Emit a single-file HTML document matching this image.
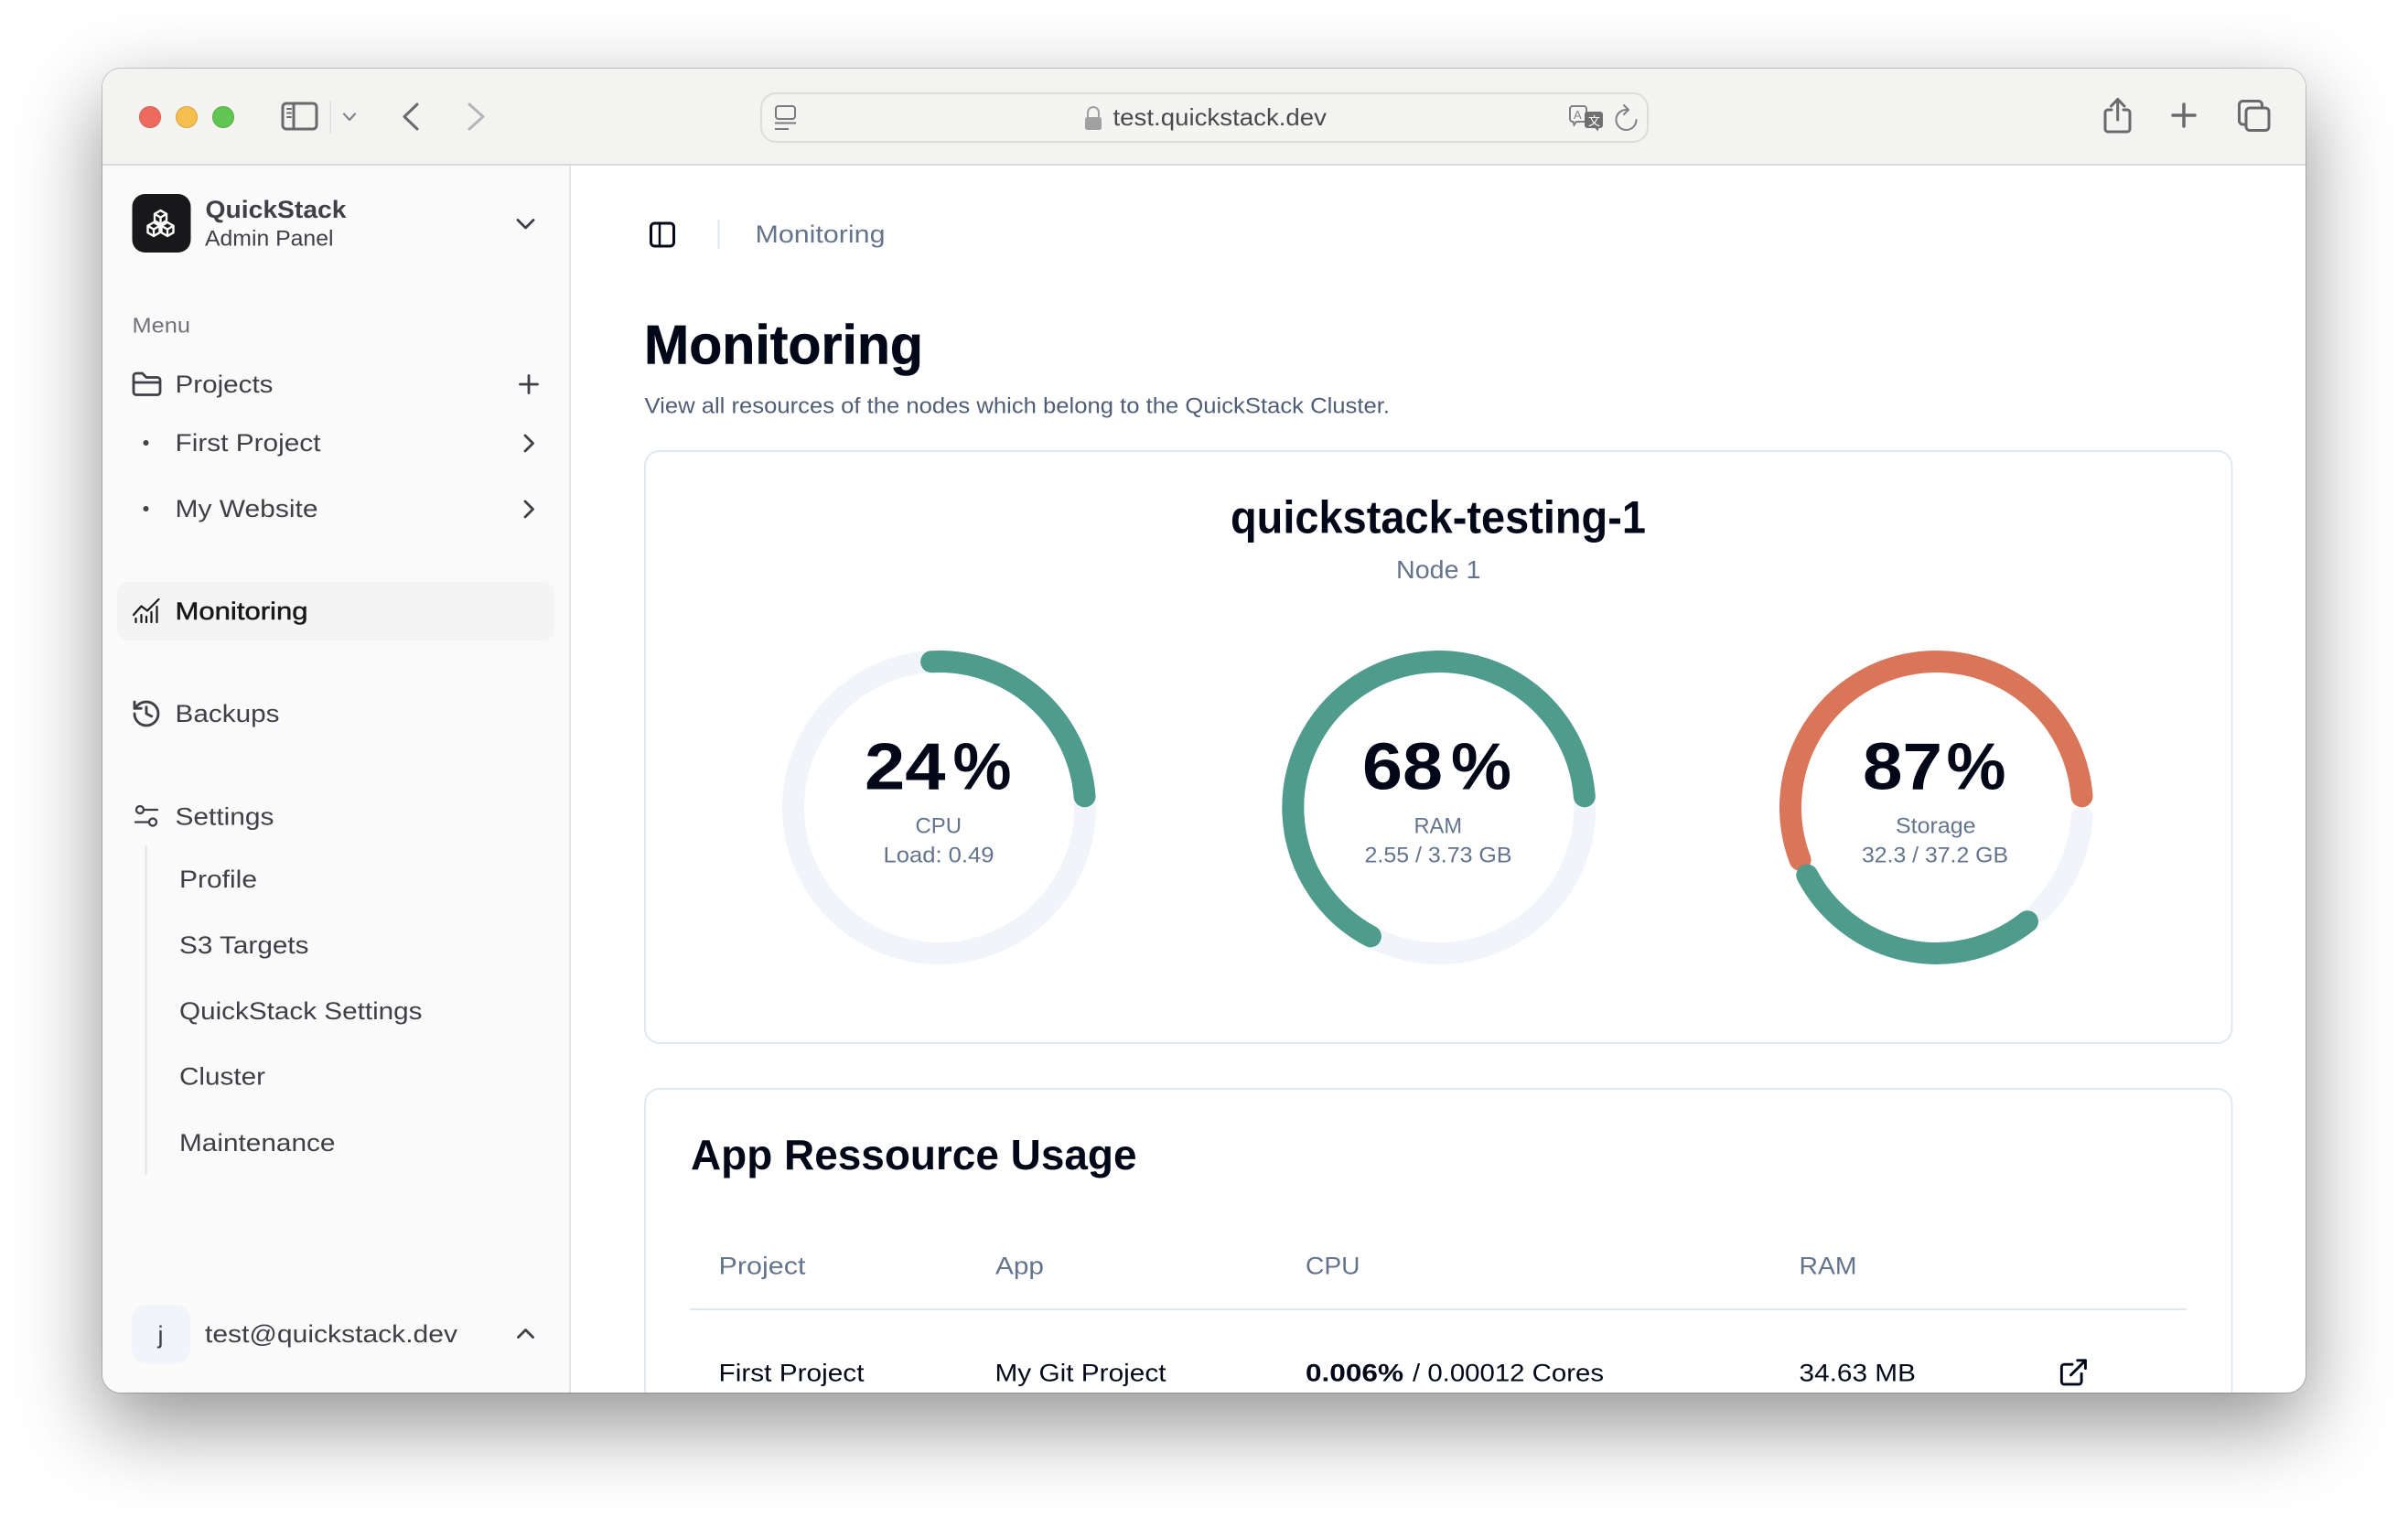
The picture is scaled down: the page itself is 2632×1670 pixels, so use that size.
<!DOCTYPE html>
<html lang="en">
<head>
<meta charset="utf-8">
<title>Monitoring - QuickStack</title>
<style>
html,body{margin:0;padding:0;background:#fff;width:2632px;height:1670px;overflow:hidden}
.win{position:absolute;left:112px;top:75px;width:2408px;height:1447px;border-radius:20px;background:#fff;box-shadow:0 34px 90px 2px rgba(0,0,0,.42),0 0 0 1px rgba(0,0,0,.18)}
.clip{position:absolute;inset:0;border-radius:20px;overflow:hidden}
svg{position:absolute;left:-112px;top:-75px;width:2632px;height:1670px}
text{font-family:"Liberation Sans","Noto Sans CJK SC",sans-serif;white-space:pre}
.s{fill:#3f3f46;font-size:27px}
.ic{fill:none;stroke:#3f3f46;stroke-width:2.8;stroke-linecap:round;stroke-linejoin:round}
.tb{fill:none;stroke:#6a6a6a;stroke-width:3;stroke-linecap:round;stroke-linejoin:round}
.dk{fill:#020817}
.mut{fill:#64748b}
.ring{fill:none;stroke-width:24;stroke-linecap:round}
</style>
</head>
<body>
<div class="win"><div class="clip">
<svg viewBox="0 0 2632 1670" xmlns="http://www.w3.org/2000/svg">
  <!-- backgrounds -->
  <rect x="112" y="75" width="2408" height="105" fill="#f3f3f2"/>
  <rect x="112" y="179" width="2408" height="2" fill="#d9d9d8"/>
  <rect x="112" y="181" width="511" height="1341" fill="#fafafa"/>
  <rect x="622" y="181" width="2" height="1341" fill="#e4e4e7"/>

  <!-- traffic lights -->
  <circle cx="164" cy="128" r="11.5" fill="#ed6a5e" stroke="#d5584d" stroke-width="1"/>
  <circle cx="204" cy="128" r="11.5" fill="#f5bf4f" stroke="#d9a33d" stroke-width="1"/>
  <circle cx="244" cy="128" r="11.5" fill="#61c554" stroke="#4fae45" stroke-width="1"/>

  <!-- toolbar left -->
  <rect x="309" y="113" width="37" height="28" rx="4" class="tb"/>
  <path d="M321 113v28" class="tb"/>
  <path d="M314 119h4M314 123.500h4M314 128h4" class="tb" style="stroke-width:2"/>
  <rect x="360.500" y="110" width="1.500" height="36" fill="#dedede"/>
  <path d="M376 124.500l6 6.500 6-6.500" class="tb" style="stroke:#858585;stroke-width:2.200"/>
  <path d="M456 114l-14 13.500 14 13.500" class="tb"/>
  <path d="M513 114l15 13.500-15 13.500" class="tb" style="stroke:#b5b5b5"/>

  <!-- url bar -->
  <rect x="832" y="102" width="969" height="53" rx="16" fill="#f4f4f3" stroke="#dcdcdb" stroke-width="2"/>
  <rect x="848" y="116" width="21" height="14" rx="3" fill="none" stroke="#7a7a7a" stroke-width="2"/>
  <path d="M847 134.500h23M847 141h15" fill="none" stroke="#7a7a7a" stroke-width="2"/>
  <rect x="1186" y="128" width="18" height="14" rx="2.500" fill="#a0a0a0"/>
  <path d="M1189 128v-5a6 6 0 0 1 12 0v5" fill="none" stroke="#a0a0a0" stroke-width="2"/>
  <text x="1216.500" y="137" font-size="26" fill="#4a4a4a" textLength="233.500" lengthAdjust="spacingAndGlyphs">test.quickstack.dev</text>
  <path d="M1719 116h12a3 3 0 0 1 3 3v11a3 3 0 0 1-3 3h-8l-2.500 3.500-1-3.500h-.5a3 3 0 0 1-3-3v-11a3 3 0 0 1 3-3z" fill="#f4f4f3" stroke="#808080" stroke-width="2"/>
  <text x="1720" y="130" font-size="13" fill="#808080">A</text>
  <path d="M1735 122h14a3 3 0 0 1 3 3v12a3 3 0 0 1-3 3h-1.500l-1 3.500-3-3.500h-8.500a3 3 0 0 1-3-3v-12a3 3 0 0 1 3-3z" fill="#6f6f6f"/>
  <text x="1736" y="137" font-size="13" fill="#fff">文</text>
  <path d="M1778 120A11 11 0 1 0 1788.500 131" fill="none" stroke="#808080" stroke-width="2" stroke-linecap="round"/>
  <path d="M1775 115l5 5-5 5" fill="none" stroke="#808080" stroke-width="2" stroke-linecap="round" stroke-linejoin="round"/>

  <!-- toolbar right -->
  <path d="M2308 120h-4a3 3 0 0 0-3 3v18a3 3 0 0 0 3 3h21a3 3 0 0 0 3-3v-18a3 3 0 0 0-3-3h-4" class="tb"/>
  <path d="M2314.700 131V110M2307.500 116l7.200-7.500 7.300 7.500" class="tb"/>
  <path d="M2375 126h24M2387 114v24" class="tb" style="stroke-width:3.500"/>
  <path d="M2454 136h-2.500a4 4 0 0 1-4-4v-17.500a4 4 0 0 1 4-4h17a4 4 0 0 1 4 4v2.500" class="tb"/>
  <rect x="2455" y="118" width="25" height="24.500" rx="4" class="tb"/>

  <!-- sidebar header -->
  <rect x="144.500" y="212" width="64" height="64" rx="14" fill="#18181b"/>
  <g fill="none" stroke="#fff" stroke-width="2.400" stroke-linejoin="round">
    <path d="M175.500 230l6.500 3.800v7.400l-6.500 3.800-6.500-3.800v-7.400zM169 233.800l6.500 3.800 6.500-3.800M175.500 237.600v7.400"/>
    <path d="M168 243l6.500 3.800v7.400l-6.500 3.800-6.500-3.800v-7.400zM161.500 246.800l6.500 3.800 6.500-3.800M168 250.600v7.400"/>
    <path d="M183 243l6.500 3.800v7.400l-6.500 3.800-6.500-3.800v-7.400zM176.500 246.800l6.500 3.800 6.500-3.800M183 250.600v7.400"/>
  </g>
  <text x="224.500" y="238" font-size="27" font-weight="700" fill="#3f3f46" textLength="154" lengthAdjust="spacingAndGlyphs">QuickStack</text>
  <text x="224" y="268.500" font-size="24" fill="#3f3f46" textLength="140.500" lengthAdjust="spacingAndGlyphs">Admin Panel</text>
  <path d="M566 240.500l8.500 8.500 8.500-8.500" class="ic"/>

  <!-- sidebar menu -->
  <text x="144.500" y="363.500" font-size="23" fill="#71717a" textLength="63.500" lengthAdjust="spacingAndGlyphs">Menu</text>

  <path d="M149 408h6.500l4.500 4.500h12a3 3 0 0 1 3 3v13a3 3 0 0 1-3 3h-23a3 3 0 0 1-3-3v-17.500a3 3 0 0 1 3-3zM146 418h28.500" class="ic"/>
  <text x="191.500" y="429" class="s" textLength="107" lengthAdjust="spacingAndGlyphs">Projects</text>
  <path d="M568.500 420h19M578 410.500v19" class="ic"/>

  <circle cx="159.500" cy="484" r="3" fill="#3f3f46"/>
  <text x="191.500" y="493" class="s" textLength="159" lengthAdjust="spacingAndGlyphs">First Project</text>
  <path d="M574 476l8.500 8.500-8.500 8.500" class="ic"/>

  <circle cx="159.500" cy="556" r="3" fill="#3f3f46"/>
  <text x="191.500" y="565" class="s" textLength="156" lengthAdjust="spacingAndGlyphs">My Website</text>
  <path d="M574 548l8.500 8.500-8.500 8.500" class="ic"/>

  <rect x="128" y="636" width="478" height="64" rx="12" fill="#f4f4f5"/>
  <path d="M146 672l8.500-9.500 6.500 5 12.500-12.500" fill="none" stroke="#18181b" stroke-width="2.200" stroke-linecap="round" stroke-linejoin="round"/>
  <path d="M148.500 680v-4M154.500 680v-8M160 680v-6M165.500 680v-11M171.500 680v-17" fill="none" stroke="#18181b" stroke-width="2.200" stroke-linecap="round"/>
  <text x="191.500" y="677" font-size="27" fill="#18181b" stroke="#18181b" stroke-width=".5" textLength="145" lengthAdjust="spacingAndGlyphs">Monitoring</text>

  <g transform="translate(142.700 762.700) scale(1.44)" fill="none" stroke="#3f3f46" stroke-width="2" stroke-linecap="round" stroke-linejoin="round">
    <path d="M3 12a9 9 0 1 0 9-9 9.750 9.750 0 0 0-6.740 2.740L3 8"/>
    <path d="M3 3v5h5"/>
    <path d="M12 7v5l4 2"/>
  </g>
  <text x="191.500" y="789" class="s" textLength="114" lengthAdjust="spacingAndGlyphs">Backups</text>

  <path d="M158 885H172M148 898.500h14" class="ic" style="stroke-width:2.300"/>
  <circle cx="153" cy="885" r="4" class="ic" style="stroke-width:2.300"/>
  <circle cx="167" cy="898.500" r="4" class="ic" style="stroke-width:2.300"/>
  <text x="191.500" y="901.500" class="s" textLength="108" lengthAdjust="spacingAndGlyphs">Settings</text>

  <rect x="158.500" y="924" width="2" height="360" fill="#e4e4e7"/>
  <text x="196" y="970" class="s" textLength="85" lengthAdjust="spacingAndGlyphs">Profile</text>
  <text x="196" y="1042" class="s" textLength="141.500" lengthAdjust="spacingAndGlyphs">S3 Targets</text>
  <text x="196" y="1114" class="s" textLength="265.500" lengthAdjust="spacingAndGlyphs">QuickStack Settings</text>
  <text x="196" y="1185.500" class="s" textLength="94" lengthAdjust="spacingAndGlyphs">Cluster</text>
  <text x="196" y="1258" class="s" textLength="170.500" lengthAdjust="spacingAndGlyphs">Maintenance</text>

  <rect x="144" y="1426" width="64" height="64" rx="16" fill="#f1f5f9"/>
  <text x="172.500" y="1468" font-size="27" fill="#3f3f46">j</text>
  <text x="224" y="1467" class="s" textLength="276" lengthAdjust="spacingAndGlyphs">test@quickstack.dev</text>
  <path d="M566.500 1461.500l8-8 8 8" class="ic"/>

  <!-- top bar -->
  <rect x="711.500" y="244" width="25" height="25" rx="4" fill="none" stroke="#020817" stroke-width="3"/>
  <path d="M721 244v25" stroke="#020817" stroke-width="2.500" fill="none"/>
  <rect x="784.500" y="240" width="2" height="32" fill="#e2e8f0"/>
  <text x="825.500" y="265" font-size="27" class="mut" textLength="142" lengthAdjust="spacingAndGlyphs">Monitoring</text>

  <!-- heading -->
  <text x="704" y="397.500" font-size="60" font-weight="700" class="dk" stroke="#020817" stroke-width=".6" textLength="305" lengthAdjust="spacingAndGlyphs">Monitoring</text>
  <text x="704.500" y="451.500" font-size="24" fill="#4f5d75" textLength="814.500" lengthAdjust="spacingAndGlyphs">View all resources of the nodes which belong to the QuickStack Cluster.</text>

  <!-- card 1 -->
  <rect x="705" y="493" width="1734.500" height="647" rx="16" fill="#fff" stroke="#e2e8f0" stroke-width="2"/>
  <text x="1345" y="582.500" font-size="50" font-weight="700" class="dk" textLength="454" lengthAdjust="spacingAndGlyphs">quickstack-testing-1</text>
  <text x="1526" y="632" font-size="28" class="mut" textLength="92.500" lengthAdjust="spacingAndGlyphs">Node 1</text>

  <!-- gauge CPU -->
  <circle cx="1026.500" cy="882.500" r="159.500" class="ring" stroke="#f1f5f9"/>
  <path d="M1018.150 723.220A159.500 159.500 0 0 1 1185.530 870.260" class="ring" stroke="#4f9b8e"/>
  <text x="945" y="862.500" font-size="72" font-weight="700" class="dk" textLength="88.500" lengthAdjust="spacingAndGlyphs">24</text>
  <text x="1041.500" y="862.500" font-size="72" font-weight="700" class="dk" textLength="64" lengthAdjust="spacingAndGlyphs">%</text>
  <text x="1000.500" y="910.500" font-size="24" class="mut" textLength="50.500" lengthAdjust="spacingAndGlyphs">CPU</text>
  <text x="965.500" y="942.500" font-size="24" class="mut" textLength="121" lengthAdjust="spacingAndGlyphs">Load: 0.49</text>

  <!-- gauge RAM -->
  <circle cx="1572.800" cy="882.500" r="159.500" class="ring" stroke="#f1f5f9"/>
  <path d="M1497.920 1023.330A159.500 159.500 0 1 1 1731.830 870.260" class="ring" stroke="#4f9b8e"/>
  <text x="1489" y="862.500" font-size="72" font-weight="700" class="dk" textLength="88" lengthAdjust="spacingAndGlyphs">68</text>
  <text x="1586" y="862.500" font-size="72" font-weight="700" class="dk" textLength="66" lengthAdjust="spacingAndGlyphs">%</text>
  <text x="1545.500" y="910.500" font-size="24" class="mut" textLength="52.500" lengthAdjust="spacingAndGlyphs">RAM</text>
  <text x="1491.500" y="942.500" font-size="24" class="mut" textLength="161" lengthAdjust="spacingAndGlyphs">2.55 / 3.73 GB</text>

  <!-- gauge Storage -->
  <path d="M2275.600 893.600A159.500 159.500 0 0 1 2229.300 995.300" class="ring" stroke="#f1f5f9"/>
  <path d="M1967.600 939.660A159.500 159.500 0 1 1 2275.530 870.260" class="ring" stroke="#d97559"/>
  <path d="M2216 1007.150A159.500 159.500 0 0 1 1975.300 956.600" class="ring" stroke="#4f9b8e"/>
  <text x="2036" y="862.500" font-size="72" font-weight="700" class="dk" textLength="87" lengthAdjust="spacingAndGlyphs">87</text>
  <text x="2127.500" y="862.500" font-size="72" font-weight="700" class="dk" textLength="65" lengthAdjust="spacingAndGlyphs">%</text>
  <text x="2072" y="910.500" font-size="24" class="mut" textLength="87.500" lengthAdjust="spacingAndGlyphs">Storage</text>
  <text x="2035" y="942.500" font-size="24" class="mut" textLength="160" lengthAdjust="spacingAndGlyphs">32.3 / 37.2 GB</text>

  <!-- card 2 -->
  <rect x="705" y="1190" width="1734.500" height="500" rx="16" fill="#fff" stroke="#e2e8f0" stroke-width="2"/>
  <text x="755" y="1278" font-size="46" font-weight="700" class="dk" textLength="487.500" lengthAdjust="spacingAndGlyphs">App Ressource Usage</text>

  <text x="785.500" y="1392.500" font-size="27" class="mut" textLength="95" lengthAdjust="spacingAndGlyphs">Project</text>
  <text x="1088" y="1392.500" font-size="27" class="mut" textLength="53" lengthAdjust="spacingAndGlyphs">App</text>
  <text x="1427" y="1392.500" font-size="27" class="mut" textLength="59.500" lengthAdjust="spacingAndGlyphs">CPU</text>
  <text x="1966.500" y="1392.500" font-size="27" class="mut" textLength="63" lengthAdjust="spacingAndGlyphs">RAM</text>
  <rect x="754" y="1430" width="1636" height="2" fill="#e2e8f0"/>

  <text x="785.500" y="1509.500" font-size="27" class="dk" textLength="159" lengthAdjust="spacingAndGlyphs">First Project</text>
  <text x="1087.500" y="1509.500" font-size="27" class="dk" textLength="187" lengthAdjust="spacingAndGlyphs">My Git Project</text>
  <text x="1427" y="1509.500" font-size="27" font-weight="700" class="dk" textLength="107" lengthAdjust="spacingAndGlyphs">0.006%</text>
  <text x="1544" y="1509.500" font-size="27" class="dk" textLength="209" lengthAdjust="spacingAndGlyphs">/ 0.00012 Cores</text>
  <text x="1966.500" y="1509.500" font-size="27" class="dk" textLength="127.500" lengthAdjust="spacingAndGlyphs">34.63 MB</text>
  <g transform="translate(2249 1482.500) scale(1.45)" fill="none" stroke="#020817" stroke-width="2" stroke-linecap="round" stroke-linejoin="round">
    <path d="M15 3h6v6"/>
    <path d="M10 14 21 3"/>
    <path d="M18 13v6a2 2 0 0 1-2 2H5a2 2 0 0 1-2-2V8a2 2 0 0 1 2-2h6"/>
  </g>
</svg>
</div></div>
</body>
</html>
